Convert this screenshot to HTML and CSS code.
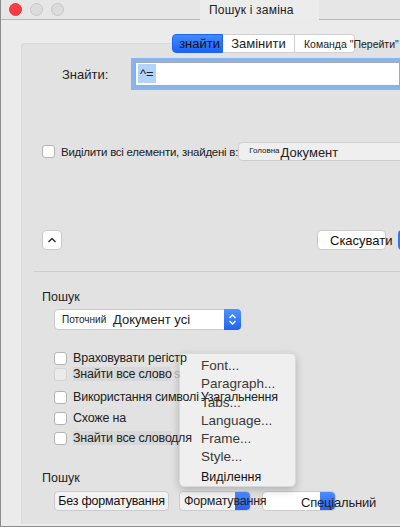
FILE: index.html
```html
<!DOCTYPE html>
<html lang="uk">
<head>
  <meta charset="UTF-8" />
  <title>Пошук і заміна</title>
  <link rel="stylesheet" href="styles.css">
</head>
<body>
  <div class="window">
    <div class="titlebar">
      <span class="light red"></span>
      <span class="light"></span>
      <span class="light"></span>
      <span class="title">Пошук і заміна</span>
    </div>

    <div class="main">
      <div class="tabs">
        <div class="tab active">знайти</div>
        <div class="tab">Замінити</div>
        <div class="tab small">Команда "Перейти"</div>
      </div>

      <div class="panel">
        <div class="find-row">
          <label class="find-label">Знайти:</label>
          <div class="find-input"><span class="sel">^=</span></div>
        </div>

        <div class="select-all">
          <span class="box"></span>
          <span class="text">Виділити всі елементи, знайдені в:</span>
          <div class="grey-select"><span class="tiny">Головна</span><span>Документ</span></div>
        </div>

        <div class="actions">
          <button class="up-btn">
            <svg width="10" height="6" viewBox="0 0 10 6"><path d="M1.5 5 L5 1.5 L8.5 5" fill="none" stroke="#333" stroke-width="1.5"/></svg>
          </button>
          <button class="cancel-btn">Скасувати</button>
          <button class="blue-btn"></button>
        </div>

        <div class="divider"></div>

        <div class="section-label">Пошук</div>
        <div class="scope-select">
          <span class="small-text">Поточний</span>
          <span class="value">Документ усі</span>
          <span class="stepper">
            <svg width="9" height="13" viewBox="0 0 9 13"><path d="M1.5 5 L4.5 2 L7.5 5 M1.5 8 L4.5 11 L7.5 8" fill="none" stroke="#fff" stroke-width="1.4"/></svg>
          </span>
        </div>

        <div class="options">
          <div class="menu">
            <div class="item">Font...</div>
            <div class="item">Paragraph...</div>
            <div class="item">Tabs...</div>
            <div class="item">Language...</div>
            <div class="item">Frame...</div>
            <div class="item">Style...</div>
            <div class="item ua">Виділення</div>
          </div>

          <div class="check r1"><span class="box"></span><span class="text">Враховувати регістр</span></div>
          <div class="check r2"><span class="box off"></span><span class="text hl">Знайти все слово</span><span class="ghost">s</span></div>
          <div class="check r3"><span class="box"></span><span class="text">Використання символі</span><span class="text over">Узагальнення</span></div>
          <div class="check r4"><span class="box"></span><span class="text">Схоже на</span></div>
          <div class="check r5"><span class="box"></span><span class="text hl">Знайти все слово</span><span class="text">для</span></div>
        </div>

        <div class="section-label bottom">Пошук</div>
        <div class="bottom-row">
          <button class="plain-btn">Без форматування</button>
          <div class="pop-btn fmt"><span class="label">Форматування</span><span class="arrow"></span></div>
          <div class="pop-btn special"><span class="label">Спеціальний</span><span class="arrow"></span></div>
        </div>
      </div>
    </div>
  </div>
</body>
</html>
```

FILE: styles.css
```css
body {
  margin: 0;
  font-family: "Liberation Sans", Arial, sans-serif;
  color: #222;
}
.window {
  width: 399px;
  height: 526px;
  border-left: 1px solid #8c8c8c;
  border-bottom: 1px solid #8c8c8c;
  background: #ebebeb;
  overflow: hidden;
}
.titlebar {
  height: 20px;
  display: flex;
  align-items: center;
  padding-left: 8px;
  background: #e6e6e6;
  border-bottom: 1px solid #b9b9b9;
  box-sizing: border-box;
}
.light {
  width: 11px;
  height: 11px;
  border-radius: 50%;
  background: #dcdcdc;
  border: 1px solid #c6c6c6;
  margin-right: 8px;
}
.light.red {
  background: #fd3b41;
  border-color: #e2393e;
}
.title {
  margin-left: 128px;
  padding: 3px 25px 3px 9px;
  font-size: 12px;
  letter-spacing: 0.2px;
  background: #ececec;
  color: #222;
}
.main {
  padding: 14px 0 0 20px;
}
.tabs {
  display: flex;
  margin-left: 151px;
  position: relative;
  z-index: 3;
  height: 19px;
  margin-bottom: -10px;
}
.tab {
  height: 19px;
  box-sizing: border-box;
  background: #fff;
  border: 1px solid #d0d0d0;
  border-left: none;
  font-size: 13px;
  line-height: 18px;
  width: 72px;
  text-align: center;
  white-space: nowrap;
}
.tab.active {
  width: 51px;
  background: linear-gradient(#3f8bff, #1d63f5);
  border: 1px solid #1d63f5;
  border-radius: 4px 0 0 4px;
  color: #111;
  text-align: right;
  padding-right: 2px;
}
.tab.small {
  width: 60px;
  font-size: 10.5px;
  text-align: left;
  padding-left: 9px;
  border-radius: 0 4px 4px 0;
}
.panel {
  background: #e2e2e2;
  border-top: 1px solid #dadada;
  border-left: 1px solid #dadada;
  border-radius: 4px 0 0 0;
  height: 481px;
  box-sizing: border-box;
  padding-left: 20px;
}
.find-row {
  display: flex;
  align-items: center;
  margin-top: 18px;
}
.find-label {
  width: 73px;
  font-size: 13px;
  padding-left: 20px;
}
.find-input {
  flex: 1;
  height: 24px;
  background: #fff;
  border: 1px solid #a9a9a9;
  box-shadow: 0 0 0 4px #86b4ef;
  box-sizing: border-box;
  padding: 1px 2px;
}
.sel {
  display: inline-block;
  background: #b2d3fa;
  font-size: 13px;
  line-height: 19px;
  padding: 0 2px;
}
.select-all {
  display: flex;
  align-items: center;
  margin-top: 56px;
  height: 19px;
}
.box {
  width: 13px;
  height: 13px;
  box-sizing: border-box;
  background: #fff;
  border: 1px solid #b4b4b4;
  border-radius: 3px;
  flex-shrink: 0;
}
.box.off {
  background: #ebebeb;
  border-color: #d4d4d4;
}
.select-all .text {
  font-size: 11.5px;
  letter-spacing: -0.25px;
  margin-left: 6px;
  white-space: nowrap;
}
.grey-select {
  margin-left: 0;
  width: 170px;
  height: 19px;
  flex-shrink: 0;
  box-sizing: border-box;
  background: #efefef;
  border: 1px solid #cfcfcf;
  border-radius: 4px 0 0 4px;
  display: flex;
  align-items: flex-end;
  padding-left: 10px;
  font-size: 13px;
  white-space: nowrap;
}
.grey-select .tiny {
  font-size: 8px;
  align-self: flex-start;
  margin-top: 3px;
  margin-right: 1px;
}
.actions {
  display: flex;
  align-items: center;
  margin-top: 69px;
}
.actions button {
  flex-shrink: 0;
}
button {
  font-family: inherit;
  cursor: pointer;
}
.up-btn {
  width: 20px;
  height: 20px;
  padding: 0;
  background: #fff;
  border: 1px solid #c9c9c9;
  border-radius: 4px;
  display: flex;
  align-items: center;
  justify-content: center;
}
.cancel-btn {
  margin-left: 255px;
  width: 69px;
  height: 20px;
  background: #fff;
  border: 1px solid #c9c9c9;
  border-radius: 4px;
  font-size: 13px;
  padding: 0 0 0 12px;
  text-align: left;
  white-space: nowrap;
  color: #111;
}
.blue-btn {
  margin-left: 12px;
  width: 60px;
  height: 20px;
  border: none;
  border-radius: 4px;
  background: #2f74f7;
}
.divider {
  height: 1px;
  background: #cdcdcd;
  margin: 21px 0 0 -8px;
}
.section-label {
  font-size: 12.5px;
  margin-top: 18px;
  height: 15px;
}
.scope-select {
  display: flex;
  align-items: center;
  margin: 4px 0 0 12px;
  width: 187px;
  height: 21px;
  box-sizing: border-box;
  background: #fff;
  border: 1px solid #c9c9c9;
  border-radius: 4px;
  white-space: nowrap;
}
.scope-select .small-text {
  font-size: 10px;
  padding-left: 7px;
  width: 44px;
}
.scope-select .value {
  font-size: 13px;
  flex: 1;
  padding-left: 7px;
}
.stepper {
  width: 17px;
  height: 21px;
  margin-right: -1px;
  background: linear-gradient(#4d93ff, #2163f2);
  border-radius: 0 4px 4px 0;
  display: flex;
  align-items: center;
  justify-content: center;
}
.options {
  position: relative;
  margin: 21px 0 0 12px;
  height: 95px;
}
.check {
  display: flex;
  align-items: center;
  height: 14px;
  position: relative;
  z-index: 2;
  white-space: nowrap;
}
.r2 { margin-top: 2px; }
.r3 { margin-top: 9px; }
.r4 { margin-top: 7px; }
.r5 { margin-top: 6px; }
.check .text {
  font-size: 12.5px;
  letter-spacing: -0.2px;
}
.check .box + .text {
  margin-left: 6px;
}
.check .hl {
  background: #d8d8d8;
  width: 98px;
}
.check .ghost {
  color: #a8a8a8;
  font-size: 12.5px;
  margin-left: 3px;
}
.check .over {
  margin-left: 2px;
}
.menu {
  position: absolute;
  left: 125px;
  top: 2px;
  width: 117px;
  height: 134px;
  z-index: 1;
  box-sizing: border-box;
  background: #efefef;
  border: 1px solid #d9d9d9;
  border-radius: 5px;
  box-shadow: 0 3px 9px rgba(0, 0, 0, 0.22);
  padding: 3px 0 0 21px;
}
.menu .item {
  font-size: 13.5px;
  line-height: 18.3px;
  color: #3a3a3a;
}
.menu .ua {
  font-size: 12.5px;
  margin-top: 1px;
  color: #111;
}
.section-label.bottom {
  margin-top: 25px;
}
.bottom-row {
  display: flex;
  margin: 5px 0 0 12px;
}
.plain-btn {
  width: 115px;
  height: 20px;
  background: #f2f2f2;
  border: 1px solid #cbcbcb;
  border-radius: 4px;
  font-size: 12.5px;
  letter-spacing: -0.2px;
  color: #111;
  padding: 0;
}
.pop-btn {
  position: relative;
  display: flex;
  height: 20px;
  box-sizing: border-box;
  border: 1px solid #cbcbcb;
  border-radius: 4px;
  white-space: nowrap;
}
.pop-btn .arrow {
  width: 15px;
  margin-left: auto;
  background: linear-gradient(#4d8cff, #2561f0);
  border-radius: 0 4px 4px 0;
}
.pop-btn .label {
  position: absolute;
  top: 2px;
  font-size: 12.5px;
  letter-spacing: -0.2px;
  z-index: 1;
}
.fmt {
  margin-left: 10px;
  width: 72px;
  background: #f2f2f2;
}
.fmt .label {
  left: 4px;
}
.special {
  margin-left: 11px;
  width: 74px;
  background: #fff;
}
.special .label {
  left: 38px;
  top: 3px;
  font-size: 13px;
}
```
